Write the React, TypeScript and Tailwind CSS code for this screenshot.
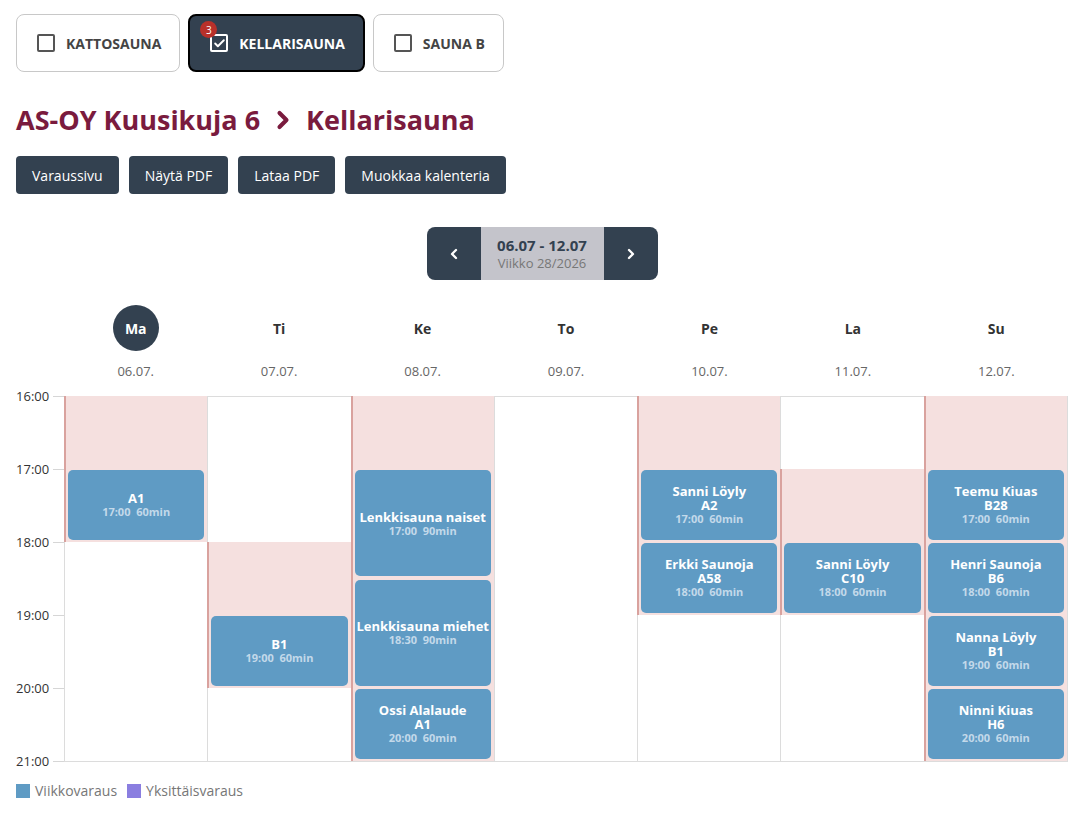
import { ChevronLeft, ChevronRight, Check } from 'lucide-react';

type Booking = { title: string[]; start: number; dur: number };
type Day = { short: string; date: string; open: [number, number] | null; bookings: Booking[]; today?: boolean };

const HOUR = 73;
const FIRST = 16;
const HOURS = [16, 17, 18, 19, 20, 21];

const days: Day[] = [
  { short: 'Ma', date: '06.07.', today: true, open: [16, 18], bookings: [{ title: ['A1'], start: 17, dur: 60 }] },
  { short: 'Ti', date: '07.07.', open: [18, 20], bookings: [{ title: ['B1'], start: 19, dur: 60 }] },
  {
    short: 'Ke',
    date: '08.07.',
    open: [16, 21],
    bookings: [
      { title: ['Lenkkisauna naiset'], start: 17, dur: 90 },
      { title: ['Lenkkisauna miehet'], start: 18.5, dur: 90 },
      { title: ['Ossi Alalaude', 'A1'], start: 20, dur: 60 },
    ],
  },
  { short: 'To', date: '09.07.', open: null, bookings: [] },
  {
    short: 'Pe',
    date: '10.07.',
    open: [16, 19],
    bookings: [
      { title: ['Sanni Löyly', 'A2'], start: 17, dur: 60 },
      { title: ['Erkki Saunoja', 'A58'], start: 18, dur: 60 },
    ],
  },
  { short: 'La', date: '11.07.', open: [17, 19], bookings: [{ title: ['Sanni Löyly', 'C10'], start: 18, dur: 60 }] },
  {
    short: 'Su',
    date: '12.07.',
    open: [16, 21],
    bookings: [
      { title: ['Teemu Kiuas', 'B28'], start: 17, dur: 60 },
      { title: ['Henri Saunoja', 'B6'], start: 18, dur: 60 },
      { title: ['Nanna Löyly', 'B1'], start: 19, dur: 60 },
      { title: ['Ninni Kiuas', 'H6'], start: 20, dur: 60 },
    ],
  },
];

function fmt(h: number) {
  const hh = Math.floor(h);
  const mm = Math.round((h - hh) * 60);
  return `${hh}:${mm.toString().padStart(2, '0')}`;
}

function SaunaTab({ label, active, badge }: { label: string; active?: boolean; badge?: number }) {
  return (
    <button
      className={
        active
          ? 'relative flex h-[58px] items-center gap-[11px] rounded-lg border-2 border-black bg-[#334150] pl-5 pr-[18px] text-[14px] font-bold text-white'
          : 'relative flex h-[58px] items-center gap-[11px] rounded-lg border border-[#c8c8c8] bg-white pl-5 pr-[18px] text-[14px] font-bold text-[#444]'
      }
    >
      {badge !== undefined && (
        <span className="absolute left-[10px] top-[5px] flex h-[17px] w-[17px] items-center justify-center rounded-full bg-[#b8302a] text-[10px] font-normal leading-none text-white">
          {badge}
        </span>
      )}
      <span
        className={
          active
            ? 'flex h-[18px] w-[18px] items-center justify-center rounded-[2px] border-2 border-white'
            : 'h-[18px] w-[18px] rounded-[2px] border-2 border-[#555]'
        }
      >
        {active && <Check className="h-[13px] w-[13px]" strokeWidth={3.5} />}
      </span>
      {label}
    </button>
  );
}

function BookingCard({ b }: { b: Booking }) {
  const top = (b.start - FIRST) * HOUR;
  const height = (b.dur / 60) * HOUR - 3.5;
  return (
    <div
      className="absolute left-[3px] right-[3px] flex flex-col items-center justify-center rounded-[5px] bg-[#5f9bc4] text-center"
      style={{ top, height }}
    >
      {b.title.map((t) => (
        <div key={t} className="text-[13px] font-bold leading-[14px] text-white">
          {t}
        </div>
      ))}
      <div className="text-[11px] font-bold leading-[13px] text-[#c3d9ea]">
        {fmt(b.start)}&nbsp; {b.dur}min
      </div>
    </div>
  );
}

export default function App() {
  return (
    <div className="min-h-screen bg-white pb-6 pl-4 pr-[10px] pt-[14px] font-['Open_Sans','Noto_Sans',sans-serif] text-[#333]">
      <div className="flex gap-2">
        <SaunaTab label="KATTOSAUNA" />
        <SaunaTab label="KELLARISAUNA" active badge={3} />
        <SaunaTab label="SAUNA B" />
      </div>

      <h1 className="mt-[29px] flex items-center gap-[9px] text-[27px] font-bold leading-[38px] text-[#7a1b3e]">
        AS-OY Kuusikuja 6
        <ChevronRight className="h-7 w-7" strokeWidth={3.5} />
        Kellarisauna
      </h1>

      <div className="mt-[17px] flex gap-[10px]">
        {['Varaussivu', 'Näytä PDF', 'Lataa PDF', 'Muokkaa kalenteria'].map((l) => (
          <button key={l} className="h-[38px] rounded-[4px] bg-[#334150] px-4 text-[14px] text-white">
            {l}
          </button>
        ))}
      </div>

      <div className="mt-[33px] flex justify-center">
        <div className="flex h-[53px] overflow-hidden rounded-lg">
          <button className="flex w-[54px] items-center justify-center bg-[#334150] text-white">
            <ChevronLeft className="h-4 w-4" strokeWidth={3.5} />
          </button>
          <div className="flex w-[123px] flex-col items-center justify-center bg-[#c4c4cb]">
            <div className="text-[15px] font-bold leading-[19px] text-[#334150]">06.07 - 12.07</div>
            <div className="text-[13px] leading-[17px] text-[#777]">Viikko 28/2026</div>
          </div>
          <button className="flex w-[54px] items-center justify-center bg-[#334150] text-white">
            <ChevronRight className="h-4 w-4" strokeWidth={3.5} />
          </button>
        </div>
      </div>

      {/* day headers */}
      <div className="mt-[25px] flex">
        <div className="w-[48px] shrink-0" />
        <div className="grid flex-1 grid-cols-7">
          {days.map((d) => (
            <div key={d.short} className="flex flex-col items-center">
              <div
                className={
                  d.today
                    ? 'flex h-[46px] w-[46px] items-center justify-center rounded-full bg-[#334150] text-[14px] font-bold text-white'
                    : 'flex h-[46px] w-[46px] items-center justify-center text-[14px] font-bold text-[#333]'
                }
              >
                {d.short}
              </div>
              <div className="mt-[10px] text-[13px] leading-[20px] text-[#666]">{d.date}</div>
            </div>
          ))}
        </div>
      </div>

      {/* time grid */}
      <div className="mt-[15px] flex">
        <div className="relative w-[48px] shrink-0" style={{ height: HOUR * 5 }}>
          {HOURS.map((h, i) => (
            <div key={h} className="absolute left-0 right-0 flex items-center" style={{ top: i * HOUR - 10 }}>
              <span className="w-[28px] text-right text-[13px] leading-[20px] text-[#333]">{h}:00</span>
              <span className="ml-[9px] h-px flex-1 bg-[#d6d6d6]" />
            </div>
          ))}
        </div>
        <div className="grid flex-1 grid-cols-7 border-y border-r border-[#dcdcdc]" style={{ height: HOUR * 5 + 1 }}>
          {days.map((d) => (
            <div key={d.short} className="relative border-l border-[#dcdcdc]">
              {d.open && (
                <div
                  className="absolute left-[-1px] right-0 border-l-2 border-[#d9a29e] bg-[#f5e0df]"
                  style={{ top: (d.open[0] - FIRST) * HOUR - 1, height: (d.open[1] - d.open[0]) * HOUR }}
                />
              )}
              {d.bookings.map((b) => (
                <BookingCard key={b.title.join() + b.start} b={b} />
              ))}
            </div>
          ))}
        </div>
      </div>

      <div className="mt-[18px] flex items-center text-[14px] text-[#777]">
        <span className="h-[14px] w-[14px] bg-[#5f9bc4]" />
        <span className="ml-[5px]">Viikkovaraus</span>
        <span className="ml-[10px] h-[14px] w-[14px] bg-[#8a7ee0]" />
        <span className="ml-[5px]">Yksittäisvaraus</span>
      </div>
    </div>
  );
}
